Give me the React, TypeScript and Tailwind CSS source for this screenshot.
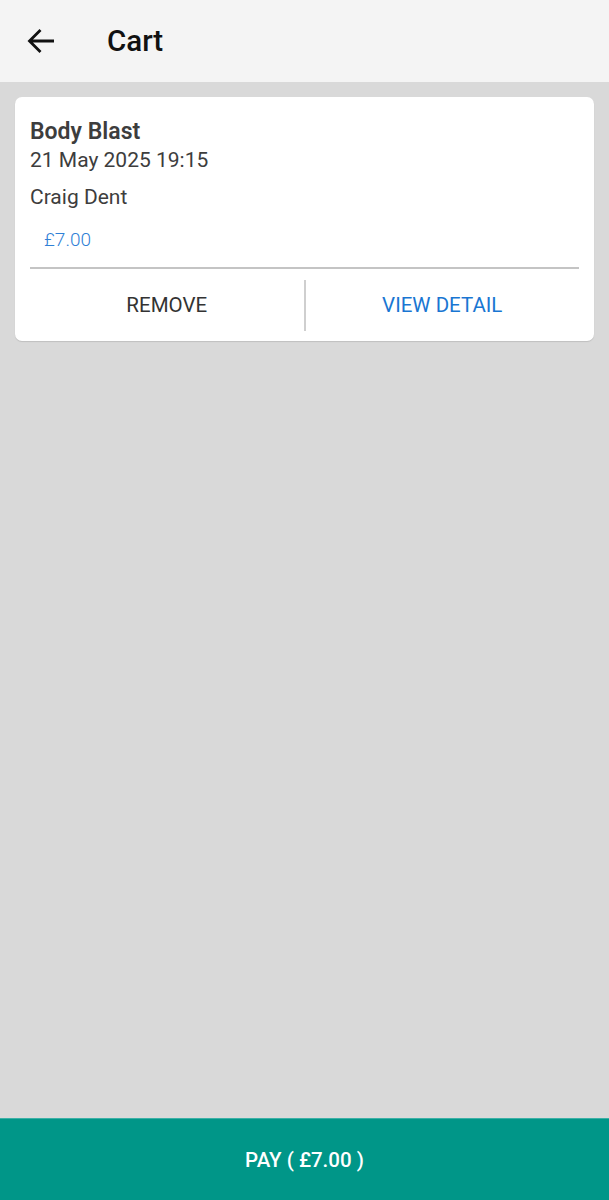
import React from "react";

export default function App() {
  return (
    <div
      className="flex flex-col w-[609px] h-[1200px] bg-[#d9d9d9]"
      style={{ fontFamily: "Roboto, 'Noto Sans', sans-serif" }}
    >
      <header className="h-[82px] bg-[#f4f4f4] flex items-center shrink-0">
        <div className="w-[107px] flex items-center pl-[27px]">
          <svg width="28" height="26" viewBox="0 0 28 26" fill="none">
            <path d="M27 13H2.5M13.5 2L2.5 13L13.5 24" stroke="#111" strokeWidth="2.8" strokeLinecap="butt" strokeLinejoin="miter" />
          </svg>
        </div>
        <h1 className="text-[29.5px] leading-none text-[#111] font-medium mt-[2px]">Cart</h1>
      </header>

      <main className="flex-1 px-[15px] pt-[15px]">
        <div className="bg-white rounded-[7px] px-[15px] pt-[21px] shadow-[0_1px_1px_rgba(0,0,0,0.12)]">
          <div className="text-[23px] leading-[28px] font-semibold text-[#3d3d3d]">Body Blast</div>
          <div className="text-[21px] leading-[28px] text-[#3d3d3d]">21 May 2025 19:15</div>
          <div className="text-[21px] leading-[28px] text-[#3d3d3d] mt-[9px]">Craig Dent</div>
          <div className="text-[19px] leading-[28px] text-[#2f80d6] font-light pl-[14px] mt-[15px]">£7.00</div>
          <div className="h-[2px] bg-[#c4c4c4] mt-[13px]" />
          <div className="flex h-[72px] items-center">
            <button className="flex-1 h-full flex items-center justify-center text-[20.5px] text-[#333] uppercase">
              Remove
            </button>
            <div className="w-[2px] h-[51px] bg-[#cfcfcf]" />
            <button className="flex-1 h-full flex items-center justify-center text-[20.5px] text-[#1976d2] uppercase">
              View Detail
            </button>
          </div>
        </div>
      </main>

      <footer className="h-[82px] bg-[#009688] flex items-center justify-center shrink-0 border-t border-[#3bb0a6]">
        <span className="text-white text-[20.5px] font-medium mt-[2px]">PAY ( £7.00 )</span>
      </footer>
    </div>
  );
}
